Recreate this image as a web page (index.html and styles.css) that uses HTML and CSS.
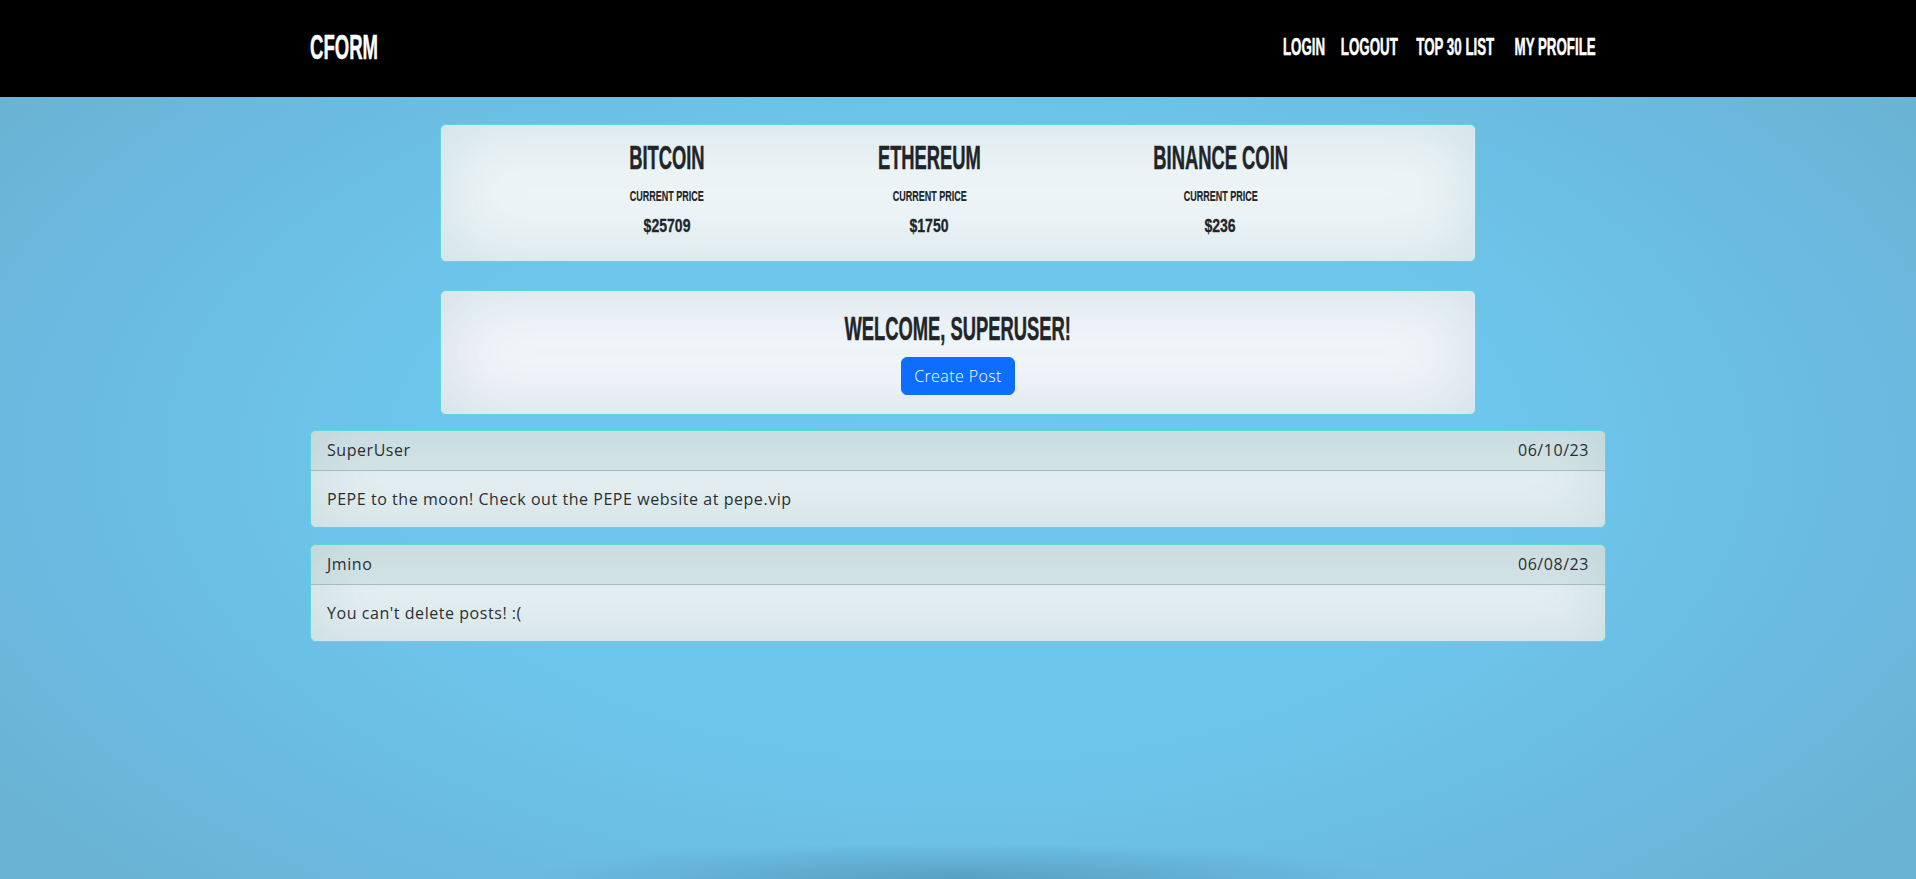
FILE: index.html
```html
<!DOCTYPE html>
<html lang="en">
<head>
<meta charset="utf-8">
<title>CFORM</title>
<link rel="stylesheet" href="styles.css">
</head>
<body>
<nav class="topbar">
  <div class="container topbar-inner">
    <a class="brand" href="#"><span class="cond cond-brand">CFORM</span></a>
    <ul class="nav-links">
      <li><a href="#"><span class="cond cond-nav">LOGIN</span></a></li>
      <li><a href="#"><span class="cond cond-nav">LOGOUT</span></a></li>
      <li><a href="#"><span class="cond cond-nav">TOP 30 LIST</span></a></li>
      <li><a href="#"><span class="cond cond-nav">MY PROFILE</span></a></li>
    </ul>
  </div>
</nav>
<main class="container">
  <section class="panel prices">
    <div class="coin">
      <h3 class="coin-name"><span class="cond cond-title">BITCOIN</span></h3>
      <p class="coin-label"><span class="cond cond-small">CURRENT PRICE</span></p>
      <p class="coin-price"><span class="cond cond-price">$25709</span></p>
    </div>
    <div class="coin">
      <h3 class="coin-name"><span class="cond cond-title">ETHEREUM</span></h3>
      <p class="coin-label"><span class="cond cond-small">CURRENT PRICE</span></p>
      <p class="coin-price"><span class="cond cond-price">$1750</span></p>
    </div>
    <div class="coin">
      <h3 class="coin-name"><span class="cond cond-title">BINANCE COIN</span></h3>
      <p class="coin-label"><span class="cond cond-small">CURRENT PRICE</span></p>
      <p class="coin-price"><span class="cond cond-price">$236</span></p>
    </div>
  </section>
  <section class="panel welcome">
    <h2 class="welcome-title"><span class="cond cond-title">WELCOME, SUPERUSER!</span></h2>
    <button class="btn-primary" type="button">Create Post</button>
  </section>
  <article class="post">
    <header class="post-header"><span>SuperUser</span><span>06/10/23</span></header>
    <div class="post-body">PEPE to the moon! Check out the PEPE website at pepe.vip</div>
  </article>
  <article class="post">
    <header class="post-header"><span>Jmino</span><span>06/08/23</span></header>
    <div class="post-body">You can't delete posts! :(</div>
  </article>
</main>
</body>
</html>
```
FILE: styles.css
```css
html {
  min-height: 100%;
  background-color: #6cc3e8;
  background-image:
    radial-gradient(ellipse 440px 36px at 50% 100%, rgba(70, 130, 160, 0.5), rgba(70, 130, 160, 0)),
    radial-gradient(ellipse 62% 72% at 50% 52%, #6dc8ee 0%, #6dc6ec 45%, #6bbbe0 75%, #6ab2d3 100%);
  background-repeat: no-repeat;
  background-attachment: fixed;
}

body {
  margin: 0;
  min-height: 100vh;
  font-family: "Open Sans", "Noto Sans", sans-serif;
  font-weight: 400;
  font-size: 16px;
  line-height: 24px;
  letter-spacing: 0.55px;
  color: #2a2e33;
}

.container {
  width: 1296px;
  margin: 0 auto;
}

.cond {
  display: inline-block;
  font-family: "Liberation Sans", Arial, sans-serif;
  font-weight: 700;
  letter-spacing: 0;
  white-space: nowrap;
  -webkit-text-stroke: 0.5px currentColor;
  transform: scaleX(0.54);
  transform-origin: 50% 50%;
}

/* top bar */
.topbar {
  background: #000;
  height: 97px;
}

.topbar-inner {
  height: 100%;
  display: flex;
  align-items: center;
  justify-content: space-between;
  box-sizing: border-box;
  padding-bottom: 4px;
}

.brand {
  display: flex;
  color: #fff;
  text-decoration: none;
  width: 70px;
}

.cond-brand {
  font-size: 35px;
  line-height: 35px;
  transform: scaleX(0.53);
  transform-origin: 0 50%;
}

.nav-links {
  list-style: none;
  margin: 0;
  padding: 0 9px 0 0;
  display: grid;
  grid-template-columns: 42px 54px 84px 83px;
  column-gap: 17px;
}

.nav-links li {
  display: flex;
  justify-content: center;
}

.nav-links a {
  display: flex;
  color: #fff;
  text-decoration: none;
}

.cond-nav {
  font-size: 24px;
  line-height: 24px;
  transform: scaleX(0.555);
}

/* panels */
.panel {
  width: 80%;
  margin: 0 auto;
  box-sizing: border-box;
  border: 1px solid #58d8dc;
  border-radius: 6px;
}

.prices {
  margin-top: 27px;
  height: 138px;
  padding: 15px 0 26px;
  display: grid;
  grid-template-columns: 76px 103px 133px;
  column-gap: 173px;
  justify-content: center;
  align-items: start;
  background: #eef5f7;
  box-shadow: inset 0 0 70px 6px #cfe2e5;
}

.coin {
  display: flex;
  flex-direction: column;
  align-items: center;
  color: #212529;
}

.coin-name,
.coin-label,
.coin-price,
.welcome-title {
  display: flex;
  justify-content: center;
  margin: 0;
  font-weight: 700;
}

.cond-title {
  font-size: 34px;
  line-height: 34px;
}

.coin-label {
  margin-top: 14px;
}

.cond-small {
  font-size: 15px;
  line-height: 15px;
  -webkit-text-stroke: 0.2px currentColor;
  transform: scaleX(0.6);
}

.coin-price {
  margin-top: 14px;
}

.cond-price {
  font-size: 18px;
  line-height: 18px;
  -webkit-text-stroke: 0.3px currentColor;
  transform: scaleX(0.78);
}

.welcome {
  margin-top: 28px;
  height: 125px;
  padding: 20px 0 19px;
  display: flex;
  flex-direction: column;
  align-items: center;
  background: #f2f6f9;
  box-shadow: inset 0 0 70px 6px #d3e0e8;
  color: #212529;
}

.welcome-title {
  width: 240px;
}

.btn-primary {
  margin-top: 12px;
  height: 38px;
  padding: 0 12px;
  border: 1px solid #0d6efd;
  border-radius: 6px;
  background: #0d6efd;
  color: #fff;
  font-family: "Open Sans", "Noto Sans", sans-serif;
  font-weight: 300;
  font-size: 16px;
  line-height: 24px;
  letter-spacing: 0.4px;
  cursor: pointer;
}

/* posts */
.post {
  margin-top: 15px;
  border: 1px solid #58d8dc;
  border-radius: 6px;
  overflow: hidden;
  background: #e5eff1;
  box-shadow: inset 0 0 60px 4px #cadde1;
}

.post + .post {
  margin-top: 16px;
}

.post-header {
  display: flex;
  justify-content: space-between;
  padding: 8px 16px;
  line-height: 23px;
  border-bottom: 1px solid #aab9bc;
  background: rgba(150, 185, 192, 0.2);
}

.post-body {
  padding: 16px;
}
```
